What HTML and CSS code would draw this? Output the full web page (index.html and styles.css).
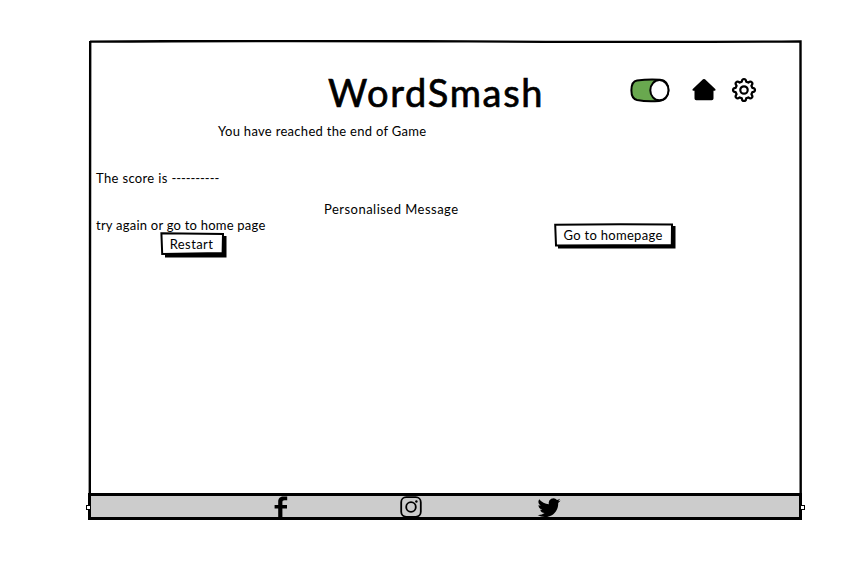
FILE: index.html
```html
<!DOCTYPE html>
<html lang="en">
<head>
<meta charset="utf-8">
<title>WordSmash</title>
<link rel="stylesheet" href="styles.css">
</head>
<body>
<main class="frame">
  <svg class="outline" viewBox="0 0 715 480" aria-hidden="true">
    <path d="M2 1.6 Q180 .4 380 1.4 T712.500 1.400 L712.700 456 M2.200 1 L1.800 456" fill="none" stroke="#000" stroke-width="2.4"/>
  </svg>
  <header class="header">
    <h1 class="title">WordSmash</h1>
    <div class="tools">
      <svg class="toggle" width="40" height="25" viewBox="0 0 40 25">
        <path d="M7 2.500 Q18 .9 30 1.700 C36 2.200 38.400 7 38.400 12.500 S35 22.500 29 22.900 Q17 23.900 7 22 C2.500 21 1.300 17 1.400 12 S3.500 3 7 2.500Z" fill="#69a84f" stroke="#000" stroke-width="2"/>
        <ellipse cx="29.4" cy="12.2" rx="9.1" ry="10.1" fill="#fff" stroke="#000" stroke-width="2"/>
      </svg>
      <svg class="home" width="26" height="24" viewBox="0 0 26 24">
        <path d="M12 1.300Q13 .6 14 1.300L24.500 11.200Q25 13.200 22.500 12.700V20.500Q22.500 22.300 20.700 22.300H5.300Q3.500 22.300 3.500 20.500V12.700Q1 13.200 1.500 11.200Z"/>
      </svg>
      <svg class="gear" width="26" height="26" viewBox="0 0 26 26" fill="none" stroke="#000" stroke-width="2.2" stroke-linejoin="round">
        <path d="M10.800 4.700Q11 2 13 2T15.200 4.700L17.300 5.600Q19.400 3.800 20.800 5.200T20.400 8.700L21.300 10.800Q24 11 24 13T21.300 15.200L20.400 17.300Q22.200 19.400 20.800 20.800T17.300 20.400L15.200 21.300Q15 24 13 24T10.800 21.300L8.700 20.400Q6.600 22.200 5.200 20.800T5.600 17.300L4.700 15.200Q2 15 2 13T4.700 10.800L5.600 8.700Q3.800 6.600 5.200 5.200T8.700 5.600Z"/>
        <circle cx="13" cy="13" r="3.7"/>
      </svg>
    </div>
  </header>
  <p class="ended">You have reached the end of Game</p>
  <p class="score">The score is <span class="dashes">----------</span></p>
  <p class="message">Personalised Message</p>
  <section class="actions">
    <div class="retry">
      <p class="hint">try again or go to home page</p>
      <button class="button restart">
        <svg class="sketch" viewBox="0 0 67 26" aria-hidden="true"><path d="M5 23.500H64.500V4" fill="none" stroke="#000" stroke-width="4"/><path d="M1.400 1.200 L63 2 L62.600 21 L2.200 22Z" fill="#fff" stroke="#000" stroke-width="2"/></svg>
        <span>Restart</span>
      </button>
    </div>
    <button class="button homepage">
      <svg class="sketch" viewBox="0 0 122 26" aria-hidden="true"><path d="M4 23.500H119.500V3" fill="none" stroke="#000" stroke-width="4"/><path d="M1.200 1.800 Q60 .8 118 1.600 L117.800 22 L2 22.500Z" fill="#fff" stroke="#000" stroke-width="2"/></svg>
      <span>Go to homepage</span>
    </button>
  </section>
  <footer class="footer">
    <i class="handle left"></i>
    <svg class="facebook" width="14" height="22" viewBox="0 0 14 22">
      <path d="M4.200 22V12.600H.6V9H4.200V6C4.200 2.300 6.300 .6 9.700 .6H13.200V4.200H10.500C8.800 4.200 8.400 5 8.400 6.300V9H13V12.600H8.400V22Z"/>
    </svg>
    <svg class="instagram" width="22" height="22" viewBox="0 0 22 22" fill="none" stroke="#000" stroke-width="1.8">
      <rect x="1.2" y="1.2" width="19.6" height="19.6" rx="5"/>
      <circle cx="11" cy="11" r="4.8"/>
      <circle cx="16.4" cy="5.5" r="1.2" fill="#000" stroke="none"/>
    </svg>
    <svg class="twitter" width="24" height="20" viewBox="0 0 24 20">
      <path d="M23.600 2.600a9.500 9.500 0 0 1-2.700 .7A4.700 4.700 0 0 0 23 .8a9.400 9.400 0 0 1-3 1.100 4.700 4.700 0 0 0-8.100 4.300A13.400 13.400 0 0 1 2.200 1.200a4.700 4.700 0 0 0 1.500 6.300 4.700 4.700 0 0 1-2.200-.6 4.700 4.700 0 0 0 3.800 4.700 4.700 4.700 0 0 1-2.100 .1 4.700 4.700 0 0 0 4.400 3.300A9.500 9.500 0 0 1 .6 17a13.400 13.400 0 0 0 7.300 2.100c8.700 0 13.700-7.400 13.300-14a9.600 9.600 0 0 0 2.400-2.500Z"/>
    </svg>
    <i class="handle right"></i>
  </footer>
</main>
</body>
</html>
```

FILE: styles.css
```css
* { box-sizing: border-box; }
body {
  margin: 0;
  padding: 40px 0 0 88px;
  background: #fff;
  color: #000;
  font: 13px/16px Lato, "Open Sans", sans-serif;
}
h1, p { margin: 0; white-space: nowrap; }
svg { display: block; flex: none; }
.frame {
  position: relative;
  display: flex;
  flex-direction: column;
  width: 715px;
  height: 480px;
}
.outline { position: absolute; inset: 0; width: 715px; height: 480px; pointer-events: none; }
.header { display: flex; align-items: flex-start; height: 83px; padding: 28px 0 0 240px; }
.title {
  width: 302px;
  font-size: 38px;
  line-height: 48px;
  font-weight: 400;
  letter-spacing: 1.7px;
  -webkit-text-stroke: .7px #000;
}
.tools { display: flex; align-items: center; padding-top: 9px; }
.home { margin-left: 21px; }
.gear { margin-left: 14px; }
.ended { padding-left: 130px; letter-spacing: .3px; }
.score { padding-left: 8px; margin-top: 31px; letter-spacing: .35px; }
.dashes { letter-spacing: -.05px; }
.message { padding-left: 236px; margin-top: 15px; letter-spacing: .48px; }
.actions { display: flex; align-items: flex-start; }
.retry { width: 466px; padding-left: 8px; }
.hint { letter-spacing: .23px; }
.button {
  position: relative;
  display: flex;
  align-items: center;
  justify-content: center;
  height: 26px;
  padding: 0 4px 2px 0;
  border: 0;
  background: none;
  color: inherit;
  font: inherit;
  white-space: nowrap;
}
.button span { position: relative; }
.sketch { position: absolute; inset: 0; width: 100%; height: 100%; }
.restart { width: 67px; margin: -1px 0 0 64px; letter-spacing: .4px; }
.homepage { width: 122px; margin-top: 6px; letter-spacing: .3px; }
.footer {
  position: relative;
  display: flex;
  align-items: center;
  width: 714px;
  height: 27px;
  margin-top: auto;
  padding-left: 183px;
  border: 3px solid #000;
  background: #ccc;
}
.instagram { margin-left: 112px; }
.twitter { margin-left: 115px; margin-top: 3px; }
.handle { position: absolute; top: 9px; width: 5px; height: 5px; border: 1px solid #000; background: #fff; }
.left { left: -5px; }
.right { right: -6px; }
```
